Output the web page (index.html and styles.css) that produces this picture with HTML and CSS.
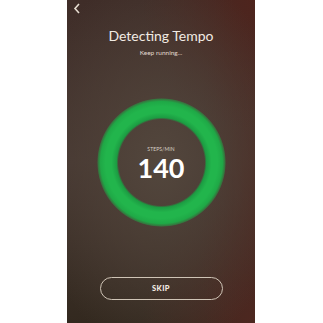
FILE: index.html
```html
<!DOCTYPE html>
<html>
<head>
<meta charset="utf-8">
<link rel="stylesheet" href="styles.css">
</head>
<body>
<div class="page">
  <div class="phone">
    <div class="topbar">
      <svg class="back" width="8" height="11" viewBox="0 0 8 11"><path d="M6 1 L2 5.5 L6 10" fill="none" stroke="#e6dcd0" stroke-width="1.6"/></svg>
    </div>
    <h1 class="title">Detecting Tempo</h1>
    <p class="subtitle">Keep running...</p>
    <div class="ring">
      <div class="label">STEPS/MIN</div>
      <div class="value">140</div>
    </div>
    <button class="skip">SKIP</button>
  </div>
</div>
</body>
</html>
```
FILE: styles.css
```css
html, body { margin: 0; padding: 0; background: #ffffff; }
.page { display: flex; justify-content: center; width: 323px; height: 323px; }
.phone {
  width: 188px; height: 323px; margin-left: -1px;
  display: flex; flex-direction: column; align-items: center;
  font-family: Lato, "Open Sans", sans-serif; color: #f2ebe3;
  background:
    radial-gradient(ellipse 70% 60% at 50% 50%, rgba(84,72,62,0.9) 0%, rgba(80,66,57,0.6) 50%, rgba(80,66,57,0) 100%),
    radial-gradient(ellipse 60% 40% at 100% 0%, #4e241d 0%, rgba(78,36,29,0) 100%),
    radial-gradient(ellipse 30% 80% at 100% 60%, rgba(77,39,32,0.8) 0%, rgba(77,39,32,0) 100%),
    radial-gradient(ellipse 60% 40% at 100% 100%, #4d2720 0%, rgba(77,39,32,0) 100%),
    linear-gradient(180deg, #3f2d28 0%, #463832 50%, #33291f 100%);
}
.topbar { align-self: stretch; height: 14px; padding: 3px 0 0 6px; box-sizing: border-box; }
.back { display: block; }
.title { margin: 13px 0 0; font-size: 14px; font-weight: 400; letter-spacing: 0; line-height: 18px; }
.subtitle { margin: 4px 0 0; font-size: 6.5px; line-height: 8px; color: #e0d8cf; }
.ring {
  margin-top: 41px; width: 129px; height: 129px; border-radius: 50%; box-sizing: border-box;
  padding-top: 3px;
  display: flex; flex-direction: column; align-items: center; justify-content: center;
  background: radial-gradient(circle closest-side, rgba(31,177,74,0) 0, rgba(31,177,74,0) 43px, #1c9c42 45px, #22b54c 50px, #22b54c 56px, #1fa846 61px, rgba(31,170,70,0.5) 63.5px, rgba(31,170,70,0) 64.5px);
}
.label { font-size: 5px; line-height: 6px; letter-spacing: 0.1px; color: #d8d0c6; }
.value { font-size: 27px; font-weight: 700; line-height: 31px; margin-top: 0; color: #ffffff; }
.skip {
  margin-top: 50px; width: 123px; height: 23px; border-radius: 12px;
  border: 1.5px solid #cfc4b6; background: transparent; color: #f2ebe3;
  font-family: Lato, sans-serif; font-size: 7.5px; font-weight: 900; letter-spacing: 0.4px; padding: 0;
}
```
